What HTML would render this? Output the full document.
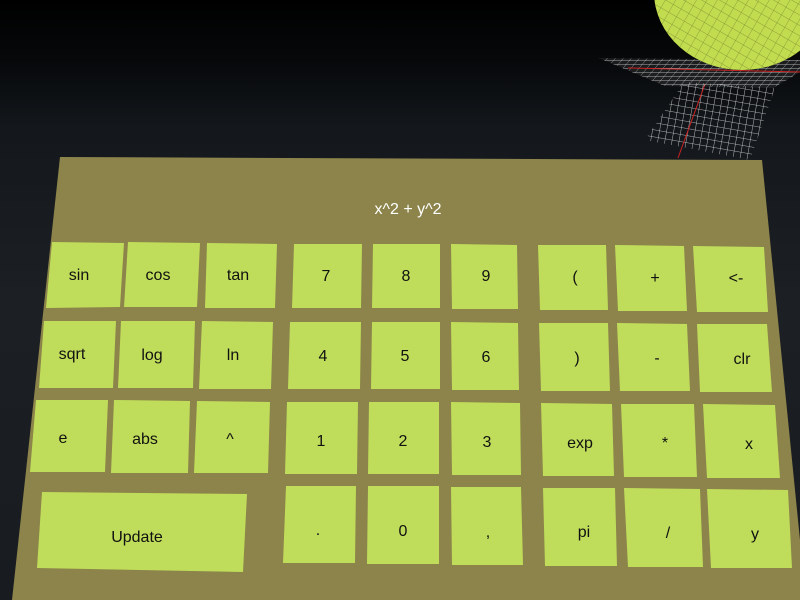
<!DOCTYPE html>
<html><head><meta charset="utf-8"><style>
html,body{margin:0;padding:0;}
body{width:800px;height:600px;overflow:hidden;background:linear-gradient(#000 0px,#06080a 60px,#14181c 130px,#1c2024 300px,#181c20 600px);position:relative;font-family:"Liberation Sans",sans-serif;}
svg{position:absolute;left:0;top:0;}
</style></head><body>
<svg width="800" height="600" viewBox="0 0 800 600">
<defs>
<pattern id="g" width="8" height="4" patternUnits="userSpaceOnUse" patternTransform="skewX(-40)">
<path d="M0 0H8M0 0V4" stroke="#ccc" stroke-width="0.7" fill="none"/></pattern>
<pattern id="g2" width="7" height="7" patternUnits="userSpaceOnUse" patternTransform="rotate(10)">
<path d="M0 0H7M0 0V7" stroke="#ddd" stroke-width="0.8" fill="none"/></pattern>
<pattern id="m" width="9" height="9" patternUnits="userSpaceOnUse" patternTransform="rotate(30)">
<path d="M0 0H9M0 0V9" stroke="#7a8a30" stroke-width="0.7" fill="none"/></pattern>
</defs>
<!-- 3D plot -->
<polygon points="684,82 775,88 750,160 645,140" fill="url(#g2)"/>
<line x1="705" y1="84" x2="678" y2="158" stroke="#c22" stroke-width="1"/>
<polygon points="599,58 800,60 800,72 773,88 665,86" fill="url(#g)"/>
<polygon points="599,58 800,60 800,72 773,88 665,86" fill="#fff" opacity="0.08"/>
<line x1="628" y1="68" x2="800" y2="72" stroke="#c22" stroke-width="1"/>
<ellipse cx="742" cy="-8" rx="88" ry="78" fill="#c2dc50"/>
<ellipse cx="742" cy="-8" rx="88" ry="78" fill="url(#m)"/>
<!-- panel -->
<polygon points="60,157 762,160 800,540 800,600 12,600" fill="#8c844a"/>
<text x="408" y="214" fill="#fff" font-size="16" text-anchor="middle">x^2 + y^2</text>
<g fill="#bfdd5a">
<polygon points="52,242 124,243 120,307 46,308"/>
<polygon points="128,242 200,243 197,307 124,307"/>
<polygon points="207,243 277,244 275,308 205,308"/>
<polygon points="294,244 362,244 361,308 292,308"/>
<polygon points="373,244 440,244 440,308 372,308"/>
<polygon points="451,244 517,245 518,309 452,309"/>
<polygon points="538,245 606,245 608,310 540,310"/>
<polygon points="615,245 684,246 687,311 618,311"/>
<polygon points="693,246 764,247 768,312 697,312"/>
<polygon points="44,321 116,321 113,388 39,388"/>
<polygon points="121,321 195,321 193,388 118,388"/>
<polygon points="202,321 273,322 271,389 199,389"/>
<polygon points="290,322 361,322 360,389 288,389"/>
<polygon points="372,322 440,322 440,389 371,389"/>
<polygon points="451,322 518,323 519,390 452,390"/>
<polygon points="539,323 608,323 610,391 541,391"/>
<polygon points="617,323 687,324 690,391 620,391"/>
<polygon points="697,324 767,324 772,392 700,392"/>
<polygon points="36,400 108,400 105,472 30,472"/>
<polygon points="114,400 190,401 188,473 111,473"/>
<polygon points="197,401 270,402 268,473 194,473"/>
<polygon points="287,402 358,402 357,474 285,474"/>
<polygon points="369,402 439,402 439,474 368,474"/>
<polygon points="451,402 520,403 521,475 452,475"/>
<polygon points="541,403 612,404 614,476 543,476"/>
<polygon points="621,404 694,404 697,477 624,477"/>
<polygon points="703,404 775,405 780,478 707,478"/>
<polygon points="42,492 247,494 243,572 37,568"/>
<polygon points="286,486 356,486 355,563 283,563"/>
<polygon points="368,486 439,486 439,564 367,564"/>
<polygon points="451,487 521,487 523,565 452,565"/>
<polygon points="543,488 615,488 617,566 545,566"/>
<polygon points="624,488 700,489 703,567 628,567"/>
<polygon points="707,489 788,490 792,568 711,568"/>
</g>
<g fill="#111" font-size="16" text-anchor="middle">
<text x="79" y="280">sin</text><text x="158" y="280">cos</text><text x="238" y="280">tan</text>
<text x="326" y="281">7</text><text x="406" y="281">8</text><text x="486" y="281">9</text>
<text x="575" y="282">(</text><text x="655" y="283">+</text><text x="736" y="283">&lt;-</text>
<text x="72" y="359">sqrt</text><text x="152" y="360">log</text><text x="233" y="360">ln</text>
<text x="323" y="361">4</text><text x="405" y="361">5</text><text x="486" y="362">6</text>
<text x="577" y="363">)</text><text x="657" y="363">-</text><text x="742" y="364">clr</text>
<text x="63" y="443">e</text><text x="145" y="444">abs</text><text x="230" y="444">^</text>
<text x="321" y="446">1</text><text x="403" y="446">2</text><text x="487" y="447">3</text>
<text x="580" y="448">exp</text><text x="665" y="448">*</text><text x="749" y="449">x</text>
<text x="137" y="542">Update</text>
<text x="318" y="535">.</text><text x="403" y="536">0</text><text x="488" y="537">,</text>
<text x="584" y="537">pi</text><text x="668" y="538">/</text><text x="755" y="539">y</text>
</g>
</svg>
</body></html>
